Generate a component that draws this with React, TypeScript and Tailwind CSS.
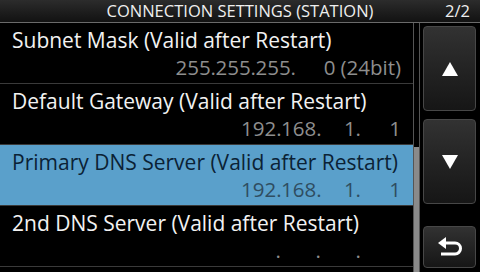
import React from 'react'

type Row = {
  title: string
  fields: string[]
  suffix?: string
  selected?: boolean
}

const ROWS: Row[] = [
  { title: 'Subnet Mask (Valid after Restart)', fields: ['255.', '255.', '255.', '0'], suffix: '(24bit)' },
  { title: 'Default Gateway (Valid after Restart)', fields: ['192.', '168.', '1.', '1'] },
  { title: 'Primary DNS Server (Valid after Restart)', fields: ['192.', '168.', '1.', '1'], selected: true },
  { title: '2nd DNS Server (Valid after Restart)', fields: ['.', '.', '.', ''] },
]

function ListRow({ row }: { row: Row }) {
  const sel = row.selected
  return (
    <div
      className={`h-[61px] border-b border-[#3a3a3a] flex flex-col pl-3 pr-[12px] ${sel ? 'bg-[#5aa0cb]' : 'bg-black'}`}
    >
      <div className={`text-[21px] leading-[25px] mt-[5px] whitespace-nowrap ${sel ? 'text-[#0b2235]' : 'text-[#f2f2f2]'}`}>
        {row.title}
      </div>
      <div className={`flex justify-end text-[20.5px] leading-[25px] mt-[2px] whitespace-nowrap ${sel ? 'text-[#2f4d61]' : 'text-[#8e8e8e]'}`}>
        {row.fields.map((f, i) => (
          <span key={i} className="text-right w-[40px]">
            {f}
          </span>
        ))}
        {row.suffix && <span className="pl-[5px]">{row.suffix}</span>}
      </div>
    </div>
  )
}

function SideButton({ children, tall }: { children: React.ReactNode; tall?: boolean }) {
  return (
    <div
      className={`${tall ? 'h-[85px]' : 'h-[42px]'} rounded-[4px] border border-[#474747] bg-gradient-to-b from-[#323232] to-[#161616] flex items-center justify-center`}
    >
      {children}
    </div>
  )
}

export default function App() {
  return (
    <div
      className="w-[480px] h-[272px] bg-black overflow-hidden flex flex-col"
      style={{ fontFamily: '"Open Sans", "Noto Sans", sans-serif' }}
    >
      {/* Kopfzeile */}
      <div className="h-[23px] shrink-0 bg-gradient-to-b from-[#2c2c2c] to-[#121212] border-b border-[#6a6a6a] flex items-center relative">
        <div className="flex-1 text-center text-[16.5px] leading-[22px] text-[#efefef]">
          CONNECTION SETTINGS (STATION)
        </div>
        <div className="absolute right-[10px] top-0 text-[16.5px] leading-[22px] text-[#efefef]">2/2</div>
      </div>

      <div className="flex flex-1 min-h-0">
        {/* Liste */}
        <div className="w-[413px] flex flex-col">
          {ROWS.map((r) => (
            <ListRow key={r.title} row={r} />
          ))}
        </div>

        {/* Scrollbalken */}
        <div className="w-[7px] border-l border-r border-[#555] flex flex-col">
          <div className="h-[124px]" />
          <div className="flex-1 bg-[#8a8a8a]" />
        </div>

        {/* Tasten */}
        <div className="flex-1 flex flex-col pl-[3px] pr-[4px] pt-[3px]">
          <SideButton tall>
            <svg width="16" height="14" viewBox="0 0 16 14">
              <polygon points="8,0 16,14 0,14" fill="#fff" />
            </svg>
          </SideButton>
          <div className="h-[8px]" />
          <SideButton tall>
            <svg width="16" height="14" viewBox="0 0 16 14">
              <polygon points="0,0 16,0 8,14" fill="#fff" />
            </svg>
          </SideButton>
          <div className="h-[22px]" />
          <SideButton>
            <svg width="28" height="22" viewBox="0 0 28 22">
              <polygon points="2,7 10,1 10,13" fill="#fff" />
              <path d="M9 7 H19 A5.5 5.5 0 0 1 19 18 H5" stroke="#fff" strokeWidth="3" fill="none" />
            </svg>
          </SideButton>
        </div>
      </div>
    </div>
  )
}
